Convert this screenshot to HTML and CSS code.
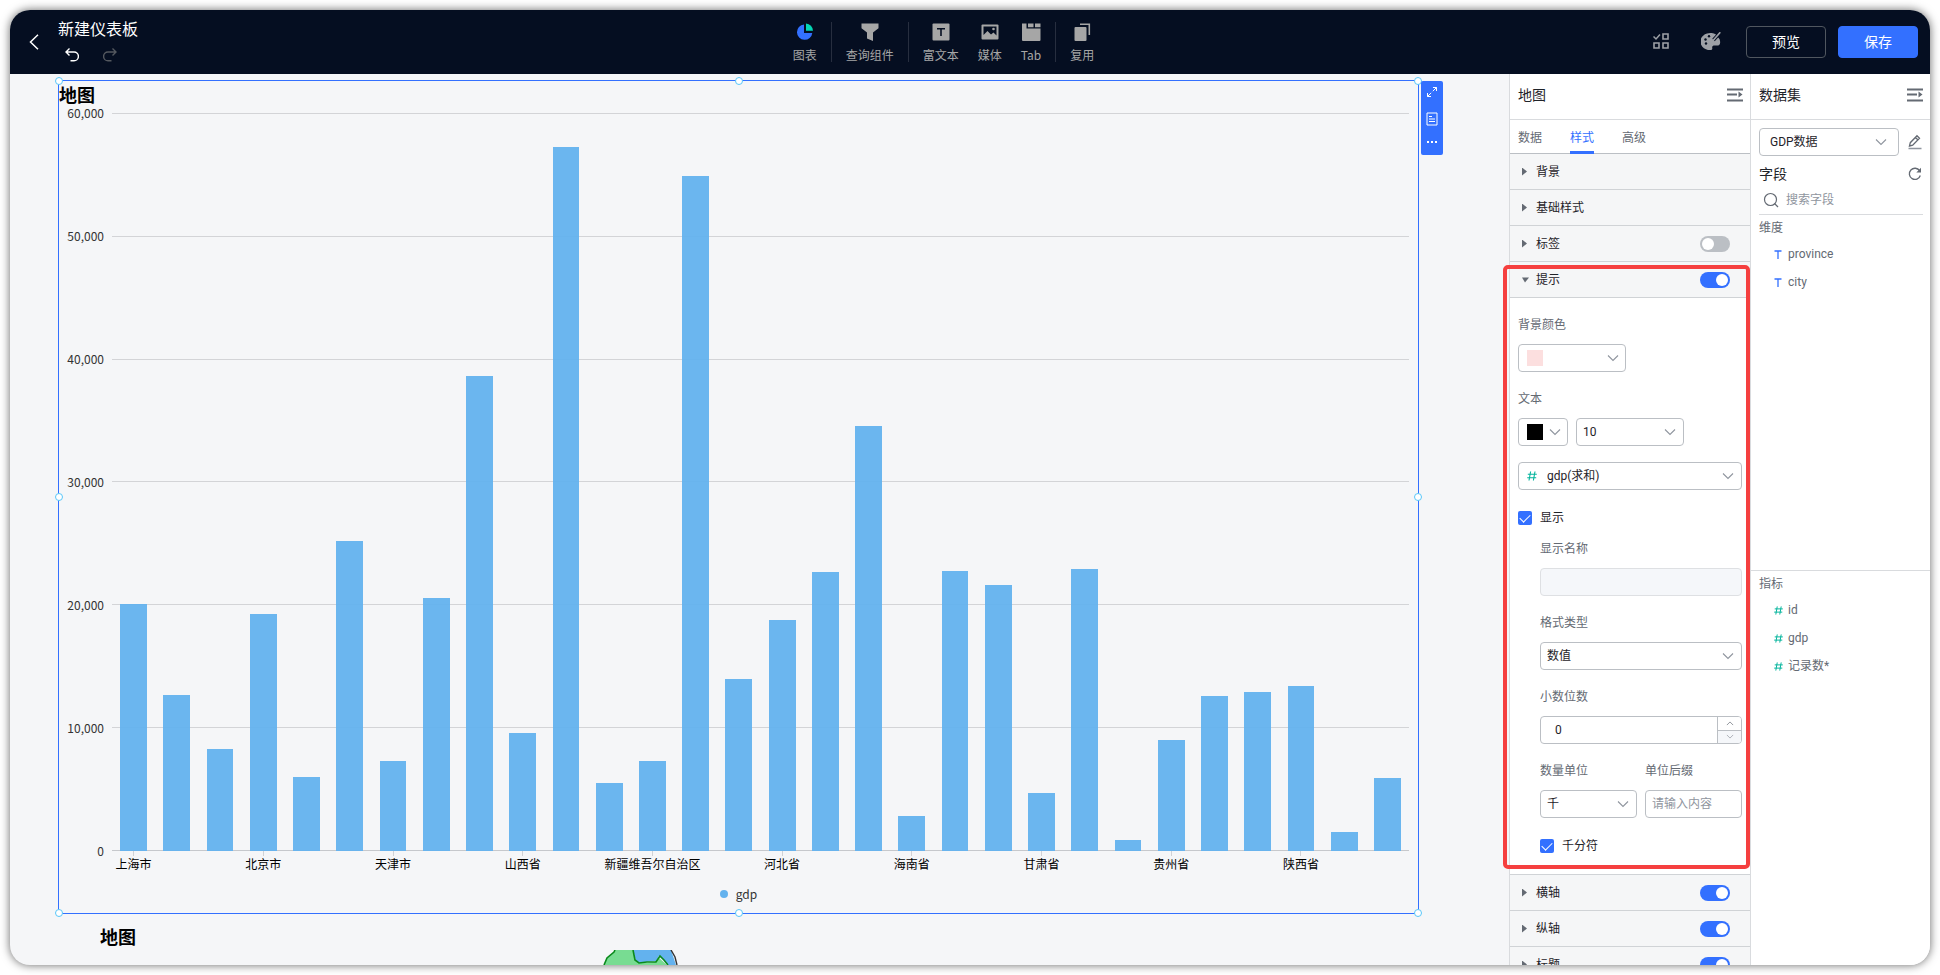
FILE: index.html
```html
<!DOCTYPE html>
<html lang="zh-CN">
<head>
<meta charset="utf-8">
<title>新建仪表板</title>
<link rel="stylesheet" href="styles.css">
</head>
<body>
<svg class="defs" width="0" height="0" aria-hidden="true">
  <symbol id="chevron" viewBox="0 0 12 8"><path d="M1 1.5l5 5 5-5" fill="none" stroke="currentColor" stroke-width="1.1"/></symbol>
  <symbol id="collapse" viewBox="0 0 16 14"><path d="M0 1.5h16M0 6.5h10M0 12.5h16" stroke="currentColor" stroke-width="2" fill="none"/><path d="M11.5 3.5v6l4-3z" fill="currentColor"/></symbol>
  <symbol id="hash" viewBox="0 0 10 10"><path d="M3.6.5L2 9.500M8 .5L6.400 9.500M.8 3.200h9M.2 6.800h9" stroke="currentColor" stroke-width="1.1" fill="none"/></symbol>
  <symbol id="letter" viewBox="0 0 8 9"><path d="M.5 1h7M4 1v8" stroke="currentColor" stroke-width="1.3" fill="none"/></symbol>
</svg>
<div class="window">
  <header class="topbar">
    <div class="doc">
      <button class="icon-btn" aria-label="返回"><svg width="10" height="16" viewBox="0 0 10 16"><path d="M9 .8L1.500 8 9 15.200" fill="none" stroke="#fff" stroke-width="1.5"/></svg></button>
      <div class="doc-info">
        <h1 class="doc-title">新建仪表板</h1>
        <div class="history">
          <button class="icon-btn" aria-label="撤销"><svg width="14" height="14" viewBox="0 0 14 14"><path d="M4.500 .5L1 4l3.500 3.500M1 4h8a4.300 4.300 0 0 1 0 8.800H5.500" fill="none" stroke="#fff" stroke-width="1.4"/></svg></button>
          <button class="icon-btn" aria-label="重做"><svg width="14" height="14" viewBox="0 0 14 14"><path d="M9.500 .5L13 4 9.500 7.500M13 4H5a4.300 4.300 0 0 0 0 8.800h3.500" fill="none" stroke="#54585f" stroke-width="1.4"/></svg></button>
        </div>
      </div>
    </div>
    <nav class="tools">
      <button class="tool"><svg width="18" height="18" viewBox="0 0 18 18"><path d="M8 1.500A7.700 7.700 0 1 0 16.300 10H8z" fill="#3370ff"/><path d="M10 .5a7.500 7.500 0 0 1 7 7.300h-7z" fill="#04d6b4"/></svg>图表</button>
      <span class="divider"></span>
      <button class="tool"><svg width="18" height="18" viewBox="0 0 18 18"><path d="M.5.5h17v4.800L12 9.500V18l-6-2.500v-6L.5 5.300z" fill="#a6a6a6"/></svg>查询组件</button>
      <span class="divider"></span>
      <div class="tool-group">
        <button class="tool"><svg width="18" height="18" viewBox="0 0 18 18"><rect x=".5" y=".5" width="17" height="17" rx="1" fill="#a6a6a6"/><path d="M5 5.800h8M9 5.800V13" stroke="#050e21" stroke-width="1.6" fill="none"/></svg>富文本</button>
        <button class="tool"><svg width="18" height="18" viewBox="0 0 18 18"><rect x=".5" y="1.500" width="17" height="15" rx="1" fill="#a6a6a6"/><path d="M2.500 3.500h13v9l-3-3-2.500 2L6.500 8l-4 4z" fill="#050e21"/><circle cx="12.500" cy="6" r="1.300" fill="#a6a6a6"/></svg>媒体</button>
        <button class="tool"><svg width="20" height="18" viewBox="0 0 20 18"><path d="M1 .5h4.500v5H19.500V17a1 1 0 0 1-1 1H2a1 1 0 0 1-1-1zM7 .5h5.500v3.700H7zM14 .5h5.500v3.700H14z" fill="#a6a6a6"/></svg>Tab</button>
      </div>
      <span class="divider"></span>
      <button class="tool"><svg width="18" height="18" viewBox="0 0 18 18"><path d="M7 1.300h9.300V12" fill="none" stroke="#a6a6a6" stroke-width="1.600"/><rect x="1.500" y="4" width="12" height="14" rx="1" fill="#a6a6a6"/></svg>复用</button>
    </nav>
    <div class="actions">
      <div class="action-icons">
        <button class="icon-btn" aria-label="批量操作"><svg width="16" height="16" viewBox="0 0 16 16"><path d="M.5 3.500L3 6l4-4.500" fill="none" stroke="#9da0a6" stroke-width="1.500"/><path d="M10 1h5v5h-5zM1 10h5v5H1zM10 10h5v5h-5z" fill="none" stroke="#9da0a6" stroke-width="1.600"/></svg></button>
        <button class="icon-btn" aria-label="主题"><svg width="20" height="18" viewBox="0 0 20 18"><path d="M15 2.500A10 8.500 0 1 0 9.500 18c1.800 0 2-1.200 1.700-2.400-.3-1.500.8-2.200 2.300-2.200H17c2 0 2.800-2.600 1.600-6.200z" fill="#9da0a6"/><g fill="#050e21"><circle cx="8" cy="4.200" r="1.200"/><circle cx="4.500" cy="7.500" r="1.200"/><circle cx="5" cy="11.500" r="1.200"/></g><path d="M19 .8L12.500 8" stroke="#050e21" stroke-width="3.400"/><path d="M19.300.3L12.500 8l-2.800 3.200" stroke="#9da0a6" stroke-width="1.700"/></svg></button>
      </div>
      <button class="btn">预览</button>
      <button class="btn btn-primary">保存</button>
    </div>
  </header>

  <div class="workspace">
    <main class="canvas">
      <section class="widget">
        <i class="handle h-tl"></i><i class="handle h-tc"></i><i class="handle h-tr"></i><i class="handle h-ml"></i><i class="handle h-mr"></i><i class="handle h-bl"></i><i class="handle h-bc"></i><i class="handle h-br"></i>
        <div class="widget-bar">
          <button class="icon-btn" aria-label="放大"><svg width="10" height="10" viewBox="0 0 10 10"><path d="M6 .5h3.500V4M9.500.5L5.800 4.200M4 9.500H.5V6M.5 9.500l3.700-3.700" fill="none" stroke="#fff"/></svg></button>
          <button class="icon-btn" aria-label="详情"><svg width="12" height="14" viewBox="0 0 12 14"><path d="M1 1h10v12H1zM3 4.500h3M3 7h6M3 9.500h6" fill="none" stroke="#fff"/></svg></button>
          <button class="icon-btn" aria-label="更多"><svg width="10" height="2" viewBox="0 0 10 2"><path d="M0 0h2v2H0zM4 0h2v2H4zM8 0h2v2H8z" fill="#fff"/></svg></button>
        </div>
        <h2 class="widget-title">地图</h2>
        <div class="chart">
          <div class="y-axis"><span>60,000</span><span>50,000</span><span>40,000</span><span>30,000</span><span>20,000</span><span>10,000</span><span>0</span></div>
          <div class="plot">
            <div class="gridlines"><i></i><i></i><i></i><i></i><i></i><i></i><i></i></div>
            <div class="bars">
              <i style="--v:20080"></i><i style="--v:12690"></i><i style="--v:8290"></i><i style="--v:19250"></i><i style="--v:6045"></i>
              <i style="--v:25230"></i><i style="--v:7290"></i><i style="--v:20570"></i><i style="--v:38590"></i><i style="--v:9570"></i>
              <i style="--v:57200"></i><i style="--v:5505"></i><i style="--v:7290"></i><i style="--v:54870"></i><i style="--v:13970"></i>
              <i style="--v:18750"></i><i style="--v:22680"></i><i style="--v:34520"></i><i style="--v:2850"></i><i style="--v:22725"></i>
              <i style="--v:21665"></i><i style="--v:4750"></i><i style="--v:22950"></i><i style="--v:905"></i><i style="--v:9030"></i>
              <i style="--v:12610"></i><i style="--v:12920"></i><i style="--v:13450"></i><i style="--v:1570"></i><i style="--v:5940"></i>
            </div>
          </div>
          <div class="x-axis">
            <span>上海市</span><span></span><span></span><span>北京市</span><span></span><span></span><span>天津市</span><span></span><span></span><span>山西省</span><span></span><span></span><span>新疆维吾尔自治区</span><span></span><span></span><span>河北省</span><span></span><span></span><span>海南省</span><span></span><span></span><span>甘肃省</span><span></span><span></span><span>贵州省</span><span></span><span></span><span>陕西省</span><span></span><span></span>
          </div>
        </div>
        <div class="legend"><i></i>gdp</div>
      </section>
      <section class="next-widget">
        <h2 class="widget-title">地图</h2>
        <svg class="map" width="76" height="15" viewBox="0 0 76 15"><path d="M1 15l3-7 7-6 1-2h18l3 11 4 2h5l10-1 3-5 9 8z" fill="#78dc92"/><path d="M30 0h38l5 15h-8l-5-5-4-4-3 5-11 1-4 1-5-2z" fill="#63b2ee"/><path d="M1 15l3-7 7-6 1-2M30 0l2 10 4 3 8-1h9l4-6 4 4 4 5" fill="none" stroke="#0a8a1c" stroke-width="1.600"/><path d="M68 0l4 7 2 8" fill="none" stroke="#333" stroke-width="1.400"/></svg>
      </section>
    </main>

    <aside class="panel style-panel">
      <div class="panel-head"><h2>地图</h2><button class="icon-btn" aria-label="收起"><svg width="16" height="14"><use href="#collapse"/></svg></button></div>
      <div class="tabs" role="tablist">
        <button role="tab">数据</button><button role="tab" class="active" aria-selected="true">样式</button><button role="tab">高级</button>
      </div>
      <div class="section-head"><i class="caret"></i><span>背景</span></div>
      <div class="section-head"><i class="caret"></i><span>基础样式</span></div>
      <label class="section-head"><i class="caret"></i><span>标签</span><input class="switch" type="checkbox" role="switch"></label>
      <div class="section open">
        <label class="section-head"><i class="caret caret-down"></i><span>提示</span><input class="switch" type="checkbox" role="switch" checked></label>
        <div class="section-body">
          <div class="field">
            <span class="label">背景颜色</span>
            <button class="control color w-medium" aria-label="背景颜色"><i class="swatch pink"></i><svg width="12" height="8"><use href="#chevron"/></svg></button>
          </div>
          <div class="field">
            <label class="label" for="size">文本</label>
            <div class="row">
              <button class="control color w-small" aria-label="文本颜色"><i class="swatch black"></i><svg width="12" height="8"><use href="#chevron"/></svg></button>
              <div class="control select w-medium"><select id="size"><option>10</option></select><svg width="12" height="8"><use href="#chevron"/></svg></div>
            </div>
          </div>
          <div class="control select with-icon measure"><svg class="hash" width="10" height="10"><use href="#hash"/></svg><select aria-label="指标"><option>gdp(求和)</option></select><svg width="12" height="8"><use href="#chevron"/></svg></div>
          <label class="check"><input type="checkbox" checked>显示</label>
          <div class="nested">
            <div class="field">
              <label class="label" for="name">显示名称</label>
              <input class="control text" id="name" type="text" disabled>
            </div>
            <div class="field">
              <label class="label" for="format">格式类型</label>
              <div class="control select"><select id="format"><option>数值</option></select><svg width="12" height="8"><use href="#chevron"/></svg></div>
            </div>
            <div class="field">
              <label class="label" for="digits">小数位数</label>
              <div class="control number">
                <input id="digits" type="number" value="0" min="0">
                <div class="steps">
                  <button aria-label="增加"><svg class="up" width="8" height="5"><use href="#chevron"/></svg></button>
                  <button aria-label="减少" disabled><svg width="8" height="5"><use href="#chevron"/></svg></button>
                </div>
              </div>
            </div>
            <div class="row halves">
              <div class="field">
                <label class="label" for="unit">数量单位</label>
                <div class="control select"><select id="unit"><option>千</option></select><svg width="12" height="8"><use href="#chevron"/></svg></div>
              </div>
              <div class="field">
                <label class="label" for="suffix">单位后缀</label>
                <input class="control text" id="suffix" type="text" placeholder="请输入内容">
              </div>
            </div>
            <label class="check last"><input type="checkbox" checked>千分符</label>
          </div>
        </div>
        <div class="highlight"></div>
      </div>
      <label class="section-head"><i class="caret"></i><span>横轴</span><input class="switch" type="checkbox" role="switch" checked></label>
      <label class="section-head"><i class="caret"></i><span>纵轴</span><input class="switch" type="checkbox" role="switch" checked></label>
      <label class="section-head"><i class="caret"></i><span>标题</span><input class="switch" type="checkbox" role="switch" checked></label>
    </aside>

    <aside class="panel data-panel">
      <div class="panel-head"><h2>数据集</h2><button class="icon-btn" aria-label="收起"><svg width="16" height="14"><use href="#collapse"/></svg></button></div>
      <div class="source">
        <div class="source-row">
          <div class="control select dataset"><select aria-label="数据集"><option>GDP数据</option></select><svg width="12" height="8"><use href="#chevron"/></svg></div>
          <button class="icon-btn" aria-label="编辑"><svg width="14" height="16" viewBox="0 0 14 16"><path d="M1.500 12l.8-3.300L9 1.800l2.500 2.500-6.800 6.800zM7.500 3.500L10 6" fill="none" stroke="#646a73" stroke-width="1.300"/><path d="M.5 14.500h13" stroke="#8f959e" stroke-width="1.500"/></svg></button>
        </div>
        <div class="source-row fields-head"><h3>字段</h3><button class="icon-btn" aria-label="刷新"><svg width="14" height="14" viewBox="0 0 14 14"><path d="M12.300 8.500A5.600 5.600 0 1 1 11.600 3.700" fill="none" stroke="#646a73" stroke-width="1.300"/><path d="M13 .8v4.700H8.300z" fill="#646a73"/></svg></button></div>
        <label class="search"><svg width="16" height="16" viewBox="0 0 16 16"><circle cx="7.500" cy="7.500" r="6" fill="none" stroke="#646a73" stroke-width="1.200"/><path d="M11.500 11.500l3.500 3.500" stroke="#646a73" stroke-width="1.300"/></svg><input type="text" placeholder="搜索字段" aria-label="搜索字段"></label>
      </div>
      <div class="fields dims">
        <h4>维度</h4>
        <ul>
          <li><svg class="letter" width="8" height="9"><use href="#letter"/></svg>province</li>
          <li><svg class="letter" width="8" height="9"><use href="#letter"/></svg>city</li>
        </ul>
      </div>
      <div class="fields measures">
        <h4>指标</h4>
        <ul>
          <li><svg class="hash" width="9" height="9"><use href="#hash"/></svg>id</li>
          <li><svg class="hash" width="9" height="9"><use href="#hash"/></svg>gdp</li>
          <li><svg class="hash" width="9" height="9"><use href="#hash"/></svg>记录数*</li>
        </ul>
      </div>
    </aside>
  </div>
</div>
</body>
</html>
```

FILE: styles.css
```css
* { box-sizing: border-box; }

body {
  margin: 0;
  padding: 10px;
  background: #fff;
  font-family: Roboto, "Noto Sans CJK SC", sans-serif;
  font-size: 12px;
  line-height: 16px;
  color: #1f2329;
}

h1, h2, h3, h4, ul { margin: 0; padding: 0; font-weight: 400; }
ul { list-style: none; }
button, input, select { font: inherit; color: inherit; margin: 0; }
button { cursor: pointer; }
svg { display: block; flex: none; }
.defs { position: absolute; }

.icon-btn { display: flex; padding: 0; border: 0; background: none; color: #646a73; }

.window {
  display: flex;
  flex-direction: column;
  height: calc(100vh - 20px);
  overflow: hidden;
  border-radius: 20px;
  background: #f5f6f8;
  box-shadow: 0 0 10px rgba(0, 0, 0, 0.6);
}

/* Top bar */
.topbar {
  display: grid;
  grid-template-columns: 782fr auto 835fr;
  flex: none;
  height: 64px;
  background: #050e21;
}
.doc { display: flex; align-items: center; gap: 19px; padding-left: 19px; }
.doc-info { display: flex; flex-direction: column; gap: 8px; padding-bottom: 3px; }
.doc-title { font-size: 16px; line-height: 20px; color: #fff; }
.history { display: flex; gap: 24px; padding-left: 7px; }
.tools { display: flex; align-items: center; gap: 14px; }
.tool-group { display: flex; gap: 19px; }
.tool {
  display: flex;
  flex-direction: column;
  align-items: center;
  gap: 6px;
  padding: 2px 0 0;
  border: 0;
  background: none;
  color: #a6a6a6;
  font-family: "Noto Sans CJK SC", sans-serif;
}
.divider { width: 1px; height: 40px; background: #272e3f; }
.actions { display: flex; align-items: center; justify-content: flex-end; gap: 12px; padding-right: 12px; }
.action-icons { display: flex; align-items: center; gap: 32px; margin-right: 13px; padding-bottom: 3px; }
.btn {
  width: 80px;
  height: 32px;
  padding: 0;
  border: 1px solid #50565f;
  border-radius: 4px;
  background: none;
  color: #fff;
  font-size: 14px;
}
.btn-primary { border-color: #3370ff; background: #3370ff; }

.workspace { display: flex; flex: 1; min-height: 0; }

/* Canvas */
.canvas {
  display: flex;
  flex: 1;
  flex-direction: column;
  min-width: 0;
  padding: 6px 90px 0 48px;
  font-family: "Noto Sans CJK SC", sans-serif;
}
.widget {
  position: relative;
  display: flex;
  flex: 1;
  flex-direction: column;
  border: 1px solid #3370ff;
}
.widget-title { font-size: 18px; line-height: 26px; font-weight: 700; color: #000; }
.handle {
  position: absolute;
  width: 8px;
  height: 8px;
  border: 1px solid #59c7f9;
  border-radius: 50%;
  background: #fff;
  transform: translate(-50%, -50%);
}
.h-tl, .h-tc, .h-tr { top: 0; }
.h-ml, .h-mr { top: 50%; }
.h-bl, .h-bc, .h-br { top: 100%; }
.h-tl, .h-ml, .h-bl { left: 0; }
.h-tc, .h-bc { left: 50%; }
.h-tr, .h-mr, .h-br { left: 100%; }
.widget-bar {
  position: absolute;
  top: 0;
  left: calc(100% + 3px);
  display: flex;
  flex-direction: column;
  align-items: center;
  justify-content: space-between;
  width: 22px;
  height: 74px;
  padding: 6px 0 12px;
  border-radius: 2px;
  background: #3370ff;
}

.chart {
  display: grid;
  flex: 1;
  grid-template-columns: 53px 1fr;
  grid-template-rows: 1fr auto;
  min-height: 0;
  margin-top: 6px;
  padding-right: 9px;
}
.y-axis {
  display: flex;
  flex-direction: column;
  justify-content: space-between;
  margin: -8px 0;
  padding-right: 8px;
  text-align: right;
  color: #333;
}
.plot { display: grid; grid-template: 100% / 100%; min-height: 0; }
.gridlines, .bars { grid-area: 1 / 1; }
.gridlines { display: flex; flex-direction: column; justify-content: space-between; }
.gridlines i { height: 1px; background: #d3d4d7; }
.gridlines i:last-child { background: #c6c8cc; }
.bars, .x-axis { display: grid; grid-template-columns: repeat(30, minmax(0, 1fr)); }
.bars { align-items: end; justify-items: center; }
.bars i { width: 62%; height: calc(var(--v) / 600 * 1%); background: #63b2ee; opacity: 0.95; }
.x-axis { grid-column: 2; height: 21px; color: #000; }
.x-axis span { display: flex; flex-direction: column; align-items: center; white-space: nowrap; }
.x-axis span:nth-child(3n + 1)::before { content: ""; width: 1px; height: 5px; background: #d0d2d6; }
.legend {
  display: flex;
  align-items: center;
  justify-content: center;
  gap: 8px;
  padding: 14px 0 11px;
  color: #333;
}
.legend i { width: 8px; height: 8px; border-radius: 50%; background: #63b2ee; }

.next-widget { display: flex; flex: none; align-items: flex-end; gap: 467px; height: 51px; padding-left: 42px; }
.next-widget .widget-title { margin-bottom: 16px; }

/* Side panels */
.panel { display: flex; flex: none; flex-direction: column; border-left: 1px solid #d9dbde; background: #fff; }
.style-panel { width: 241px; }
.data-panel { width: 180px; }
.panel-head {
  display: flex;
  flex: none;
  align-items: center;
  justify-content: space-between;
  height: 46px;
  padding: 0 7px 4px 8px;
  border-bottom: 1px solid #d9dbde;
}
.panel-head h2 { font-size: 14px; line-height: 20px; }
.tabs { display: flex; flex: none; gap: 28px; height: 34px; padding: 0 8px; border-bottom: 1px solid #bbbfc4; }
.tabs button { height: 34px; padding: 5px 0 0; border: 0; border-bottom: 3px solid transparent; background: none; color: #646a73; }
.tabs .active { border-color: #3370ff; color: #3370ff; }

.section-head {
  display: flex;
  flex: none;
  align-items: center;
  height: 36px;
  padding: 0 20px 0 12px;
  border-bottom: 1px solid #d0d3d6;
  background: #f5f6f7;
}
.section-head span { flex: 1; }
.caret { width: 14px; height: 8px; background: #646a73; clip-path: polygon(0 0, 5px 4px, 0 8px); }
.caret-down { clip-path: polygon(0 2px, 7px 2px, 3px 7px); }
.switch {
  width: 30px;
  height: 16px;
  padding: 2px;
  border-radius: 8px;
  background: #bbbfc4;
  appearance: none;
}
.switch::before { content: ""; display: block; width: 12px; height: 12px; border-radius: 50%; background: #fff; }
.switch:checked { background: #3370ff; }
.switch:checked::before { margin-left: auto; }

.section { position: relative; flex: none; }
.section-body { padding: 19px 8px 20px; border-bottom: 1px solid #d0d3d6; }
.highlight {
  position: absolute;
  inset: 3px 0 6px -7px;
  border: 4px solid #f53f3f;
  border-radius: 5px;
  pointer-events: none;
}
.field { display: flex; flex-direction: column; gap: 11px; margin-bottom: 19px; }
.label { color: #646a73; }
.row { display: flex; gap: 8px; }
.halves .field { flex: 1; min-width: 0; }
.nested { padding-left: 22px; }

.control { height: 28px; border: 1px solid #bbbfc4; border-radius: 4px; background: #fff; color: #1f2329; }
.control svg { color: #8f959e; }
.color { display: flex; align-items: center; justify-content: space-between; padding: 0 6px 0 8px; }
.w-medium { width: 108px; }
.w-small { width: 50px; }
.swatch { width: 16px; height: 16px; }
.pink { background: #fcdfdf; }
.black { background: #000; }
.select { display: flex; align-items: center; padding-right: 7px; }
.select select {
  flex: 1;
  min-width: 0;
  height: 26px;
  margin-right: -19px;
  padding: 0 19px 0 6px;
  border: 0;
  background: none;
  appearance: none;
}
.with-icon { padding-left: 8px; }
.with-icon select { padding-left: 10px; }
.control .hash, .hash { color: #04b49c; }
.letter { color: #3370ff; }
.measure { margin: -3px 0 20px; }
.text { width: 100%; padding: 0 6px; }
.text:disabled { border-color: #dee0e3; background: #f5f7fa; }
.text::placeholder, .search input::placeholder { color: #8f959e; opacity: 1; }
.number { display: flex; overflow: hidden; }
.number input { flex: 1; min-width: 0; padding: 0 14px; border: 0; background: none; appearance: textfield; }
.number input::-webkit-inner-spin-button { appearance: none; margin: 0; }
.steps { display: flex; flex-direction: column; width: 24px; border-left: 1px solid #bbbfc4; }
.steps button { display: grid; flex: 1; place-items: center; padding: 0; border: 0; background: #fff; }
.steps button + button { border-top: 1px solid #bbbfc4; background: #f5f7fa; }
.steps .up { color: #646a73; transform: scaleY(-1); }

.check { display: flex; align-items: center; gap: 8px; margin-bottom: 15px; }
.last { margin: 1px 0 0; }
.check input {
  display: grid;
  place-items: center;
  width: 14px;
  height: 14px;
  border-radius: 2px;
  background: #3370ff;
  appearance: none;
}
.check input::before {
  content: "";
  width: 9px;
  height: 5px;
  margin-bottom: 2px;
  border: solid #fff;
  border-width: 0 0 1px 1px;
  transform: rotate(-45deg);
}

/* Dataset */
.source { padding: 8px 7px 0 8px; }
.source-row { display: flex; align-items: center; justify-content: space-between; }
.source-row .icon-btn { margin-right: 1px; }
.dataset { width: 140px; padding-right: 11px; }
.dataset select { padding-left: 10px; }
.fields-head { margin-top: 10px; }
.search { display: flex; align-items: center; gap: 7px; height: 33px; padding: 4px 0 0 4px; border-bottom: 1px solid #d9dbde; }
.search input { flex: 1; min-width: 0; padding: 0; border: 0; outline: 0; background: none; }
.fields { padding: 5px 8px 0; color: #646a73; }
.dims { flex: 9; }
.measures { flex: 10; border-top: 1px solid #d9dbde; }
.fields ul { padding: 4px 0 0 15px; }
.fields li { display: flex; align-items: center; gap: 6px; height: 28px; }
.measures li { gap: 5px; }
```
